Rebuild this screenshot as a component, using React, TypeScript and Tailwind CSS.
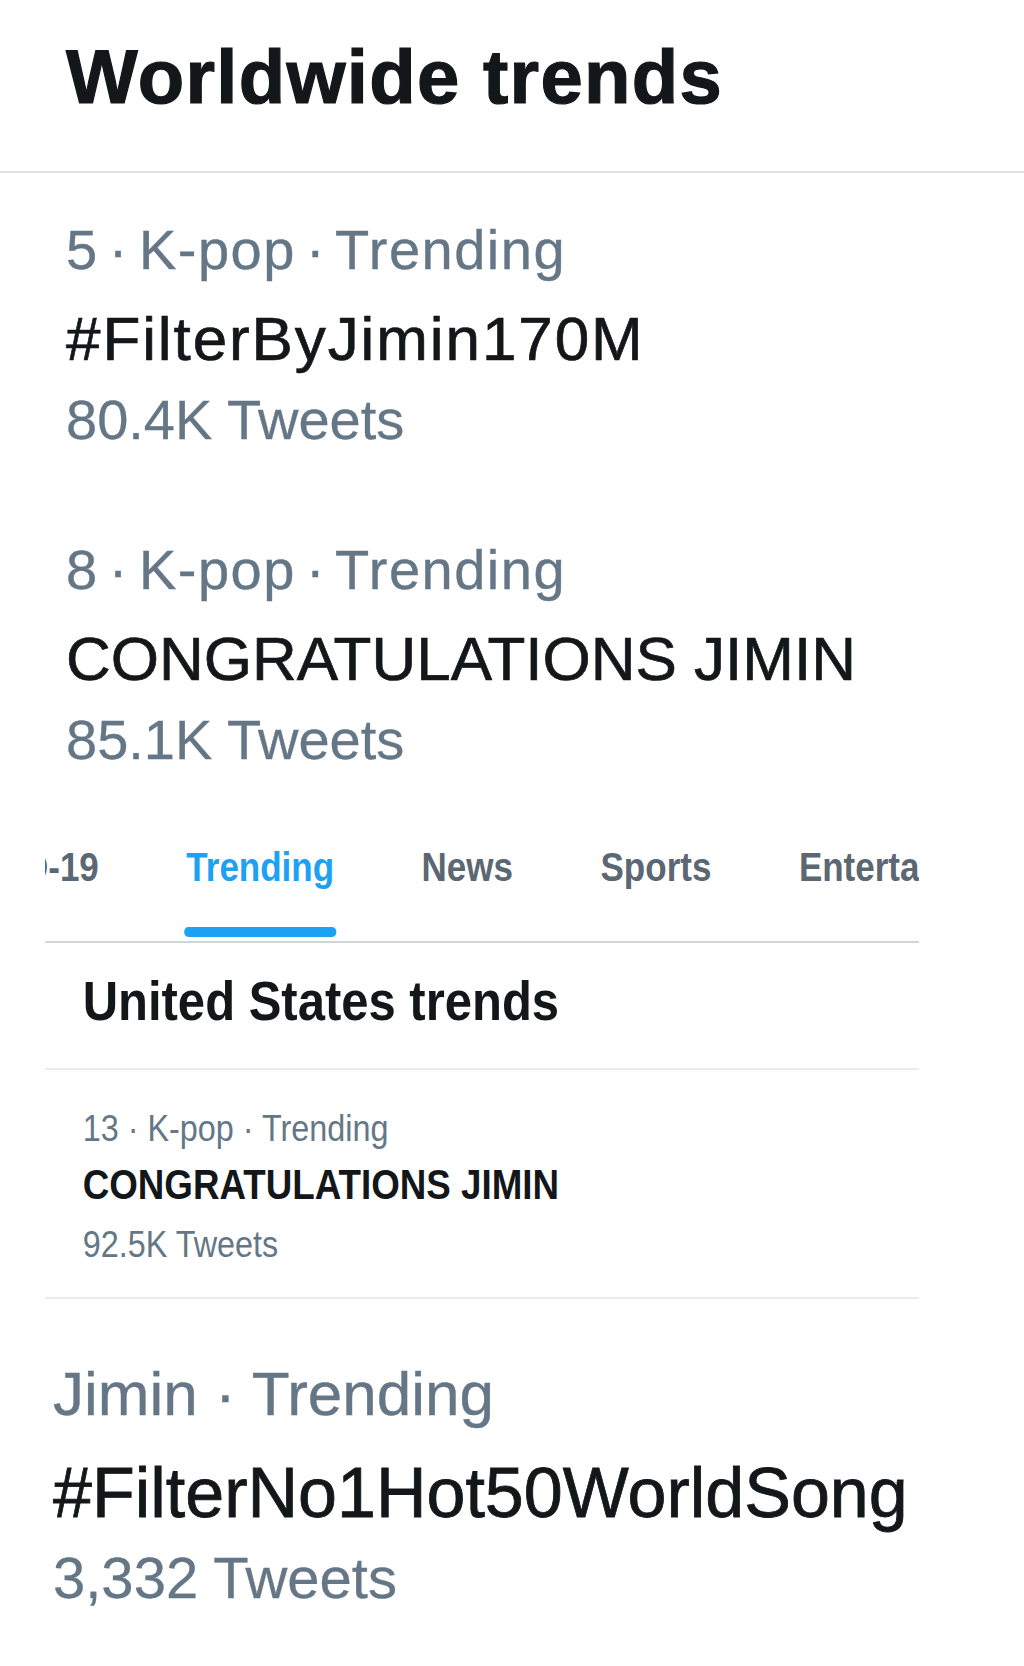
import React from "react";

type TrendProps = {
  meta: string;
  title: string;
  tweets: string;
  titleClass?: string;
};

function BigTrend({ meta, title, tweets, titleClass = "" }: TrendProps) {
  return (
    <div>
      <div className="text-[56px] leading-[56px] text-[#657786] whitespace-nowrap tracking-[1.5px] [word-spacing:-7px] [-webkit-text-stroke:0.4px_#657786]">
        {meta}
      </div>
      <div
        className={`mt-[30px] text-[62px] leading-[62px] text-[#14171a] whitespace-nowrap [-webkit-text-stroke:0.7px_#14171a] ${titleClass}`}
      >
        {title}
      </div>
      <div className="mt-[22px] text-[56px] leading-[56px] text-[#657786] whitespace-nowrap [-webkit-text-stroke:0.3px_#657786]">
        {tweets}
      </div>
    </div>
  );
}

function Tab({ label, active = false, first = false }: { label: string; active?: boolean; first?: boolean }) {
  return (
    <div className={`flex shrink-0 flex-col pb-[4px] ${first ? "-ml-[123px]" : ""}`}>
      <span
        className={`whitespace-nowrap text-[40px] leading-[40px] font-bold ${
          active ? "text-[#1da1f2]" : "text-[#5b6772]"
        }`}
      >
        {label}
      </span>
      <div className={`-mx-[3px] mt-[40px] h-[10px] rounded-full ${active ? "bg-[#1da1f2]" : "bg-transparent"}`} />
    </div>
  );
}

export default function App() {
  return (
    <div className="min-h-[1666px] w-[1024px] overflow-hidden bg-white font-['Liberation_Sans',Arial,sans-serif]">
      {/* Header */}
      <header className="pl-[66px] pt-[39px]">
        <h1 className="whitespace-nowrap text-[76px] leading-[76px] font-bold tracking-[1.3px] text-[#14171a] [-webkit-text-stroke:1.2px_#14171a]">
          Worldwide trends
        </h1>
      </header>
      <div className="mt-[56px] h-[2px] bg-[#dfe3e7]" />

      {/* Worldwide items */}
      <section className="pl-[66px]">
        <div className="mt-[49px]">
          <BigTrend
            meta="5 · K-pop · Trending"
            title="#FilterByJimin170M"
            tweets="80.4K Tweets"
            titleClass="tracking-[1.9px]"
          />
        </div>
        <div className="mt-[94px]">
          <BigTrend meta="8 · K-pop · Trending" title="CONGRATULATIONS JIMIN" tweets="85.1K Tweets" />
        </div>
      </section>

      {/* Tabs + United States trends (narrower screenshot) */}
      <div className="ml-[45px] mt-[79px] w-[874px] overflow-hidden">
        <div className="w-[999px] origin-left scale-x-[0.875]">
          <nav className="flex gap-[100px] overflow-hidden border-b-2 border-[#cfd6db]">
            <Tab label="COVID-19" first />
            <Tab label="Trending" active />
            <Tab label="News" />
            <Tab label="Sports" />
            <Tab label="Entertainment" />
          </nav>

          <h2 className="mt-[30px] pl-[43px] whitespace-nowrap text-[56px] leading-[56px] font-bold text-[#14171a]">
            United States trends
          </h2>
          <div className="mt-[39px] h-[2px] bg-[#e8ecef]" />

          <div className="pl-[43px]">
            <div className="mt-[40px] whitespace-nowrap text-[37px] leading-[37px] text-[#657786]">
              13 · K-pop · Trending
            </div>
            <div className="mt-[17px] whitespace-nowrap text-[42px] leading-[42px] font-bold text-[#14171a]">
              CONGRATULATIONS JIMIN
            </div>
            <div className="mt-[20px] whitespace-nowrap text-[37px] leading-[37px] text-[#657786]">
              92.5K Tweets
            </div>
          </div>
          <div className="mt-[34px] h-[2px] bg-[#e8ecef]" />
        </div>
      </div>

      {/* Last trend */}
      <section className="pl-[53px]">
        <div className="mt-[64px] whitespace-nowrap text-[62px] leading-[62px] text-[#657786] [-webkit-text-stroke:0.4px_#657786]">
          Jimin · Trending
        </div>
        <div className="mt-[33px] whitespace-nowrap text-[70px] leading-[70px] text-[#14171a] [-webkit-text-stroke:0.8px_#14171a]">
          #FilterNo1Hot50WorldSong
        </div>
        <div className="mt-[21px] whitespace-nowrap text-[58px] leading-[58px] text-[#657786] [-webkit-text-stroke:0.3px_#657786]">
          3,332 Tweets
        </div>
      </section>
    </div>
  );
}
